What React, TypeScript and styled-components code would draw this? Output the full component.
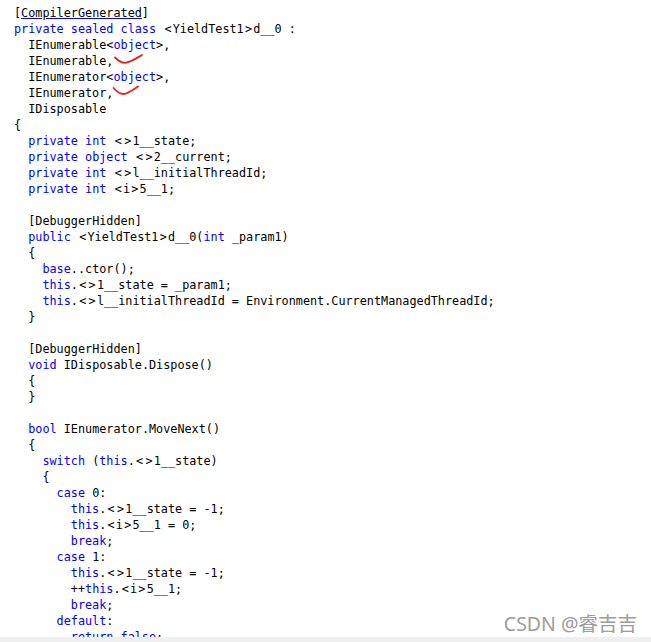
import React from "react";
import styled, { createGlobalStyle } from "styled-components";

const Global = createGlobalStyle`
  html, body { margin: 0; padding: 0; background: #ffffff; }
  body { width: 651px; height: 642px; overflow: hidden; }
`;

const Page = styled.div`
  width: 651px;
  height: 642px;
  display: flex;
  flex-direction: column;
  background: #ffffff;
`;

const Viewer = styled.div`
  position: relative;
  height: 637px;
  overflow: hidden;
  padding: 5px 0 0 14px;
  box-sizing: border-box;
  font-family: "DejaVu Sans Mono", "Liberation Mono", monospace;
  font-size: 11.8px;
  line-height: 16px;
  color: #000000;
`;

const Footer = styled.div`
  flex: 1;
  background: #efefef;
`;

const Line = styled.div<{ $level: number }>`
  height: 16px;
  white-space: pre;
  padding-left: ${(p) => p.$level * 2}ch;
`;

const Kw = styled.span`
  color: #0000ff;
`;

const Angle = styled.span`
  margin: 0 1.2px;
`;

const Attr = styled.span`
  color: #000000;
  text-decoration: underline;
  text-decoration-color: #0000ff;
  text-underline-offset: 1px;
`;

const Mark = styled.svg`
  vertical-align: top;
  overflow: visible;
`;

const Watermark = styled.div`
  position: absolute;
  right: 14px;
  bottom: 1px;
  font-family: "Noto Sans", "Noto Sans CJK SC", sans-serif;
  font-size: 19.5px;
  line-height: 24px;
  color: #9c9c9c;
  white-space: nowrap;
`;

const KEYWORDS = new Set([
  "private", "sealed", "class", "object", "int", "public", "base", "this",
  "void", "bool", "switch", "case", "break", "default", "return", "false",
]);

type Row = { level: number; text: string; mark?: 1 | 2 };

const rows: Row[] = [
  { level: 0, text: "[CompilerGenerated]" },
  { level: 0, text: "private sealed class <YieldTest1>d__0 :" },
  { level: 1, text: "IEnumerable<object>," },
  { level: 1, text: "IEnumerable,", mark: 1 },
  { level: 1, text: "IEnumerator<object>," },
  { level: 1, text: "IEnumerator,", mark: 2 },
  { level: 1, text: "IDisposable" },
  { level: 0, text: "{" },
  { level: 1, text: "private int <>1__state;" },
  { level: 1, text: "private object <>2__current;" },
  { level: 1, text: "private int <>l__initialThreadId;" },
  { level: 1, text: "private int <i>5__1;" },
  { level: 1, text: "" },
  { level: 1, text: "[DebuggerHidden]" },
  { level: 1, text: "public <YieldTest1>d__0(int _param1)" },
  { level: 1, text: "{" },
  { level: 2, text: "base..ctor();" },
  { level: 2, text: "this.<>1__state = _param1;" },
  { level: 2, text: "this.<>l__initialThreadId = Environment.CurrentManagedThreadId;" },
  { level: 1, text: "}" },
  { level: 1, text: "" },
  { level: 1, text: "[DebuggerHidden]" },
  { level: 1, text: "void IDisposable.Dispose()" },
  { level: 1, text: "{" },
  { level: 1, text: "}" },
  { level: 1, text: "" },
  { level: 1, text: "bool IEnumerator.MoveNext()" },
  { level: 1, text: "{" },
  { level: 2, text: "switch (this.<>1__state)" },
  { level: 2, text: "{" },
  { level: 3, text: "case 0:" },
  { level: 4, text: "this.<>1__state = -1;" },
  { level: 4, text: "this.<i>5__1 = 0;" },
  { level: 4, text: "break;" },
  { level: 3, text: "case 1:" },
  { level: 4, text: "this.<>1__state = -1;" },
  { level: 4, text: "++this.<i>5__1;" },
  { level: 4, text: "break;" },
  { level: 3, text: "default:" },
  { level: 4, text: "return false;" },
];

function renderTokens(text: string) {
  if (text === "[CompilerGenerated]") {
    return (
      <>
        [<Attr>CompilerGenerated</Attr>]
      </>
    );
  }
  const generic = text.includes("<object>");
  const parts = text.split(/([A-Za-z_][A-Za-z0-9_]*|[<>])/).filter((p) => p !== "");
  return parts.map((part, i) => {
    if (KEYWORDS.has(part)) return <Kw key={i}>{part}</Kw>;
    if (!generic && (part === "<" || part === ">")) return <Angle key={i}>{part}</Angle>;
    return <React.Fragment key={i}>{part}</React.Fragment>;
  });
}

const Squiggle: React.FC<{ variant: 1 | 2 }> = ({ variant }) =>
  variant === 1 ? (
    <Mark width="30" height="12" viewBox="0 0 30 12">
      <path
        d="M2 4.5 C5 7.5 9 10 12.5 9.8 C17 9.5 23 5.5 29 2"
        fill="none"
        stroke="#e8231f"
        strokeWidth="1.8"
        strokeLinecap="round"
      />
    </Mark>
  ) : (
    <Mark width="28" height="12" viewBox="0 0 28 12">
      <path
        d="M0.5 3 C3.5 6.5 7 9 10.5 9 C15 9 20 5 25 1.5"
        fill="none"
        stroke="#e8231f"
        strokeWidth="1.8"
        strokeLinecap="round"
      />
    </Mark>
  );

export default function App() {
  return (
    <Page>
      <Global />
      <Viewer>
        {rows.map((r, i) => (
          <Line key={i} $level={r.level}>
            {renderTokens(r.text)}
            {r.mark ? <Squiggle variant={r.mark} /> : null}
          </Line>
        ))}
        <Watermark>CSDN @睿吉吉</Watermark>
      </Viewer>
      <Footer />
    </Page>
  );
}
